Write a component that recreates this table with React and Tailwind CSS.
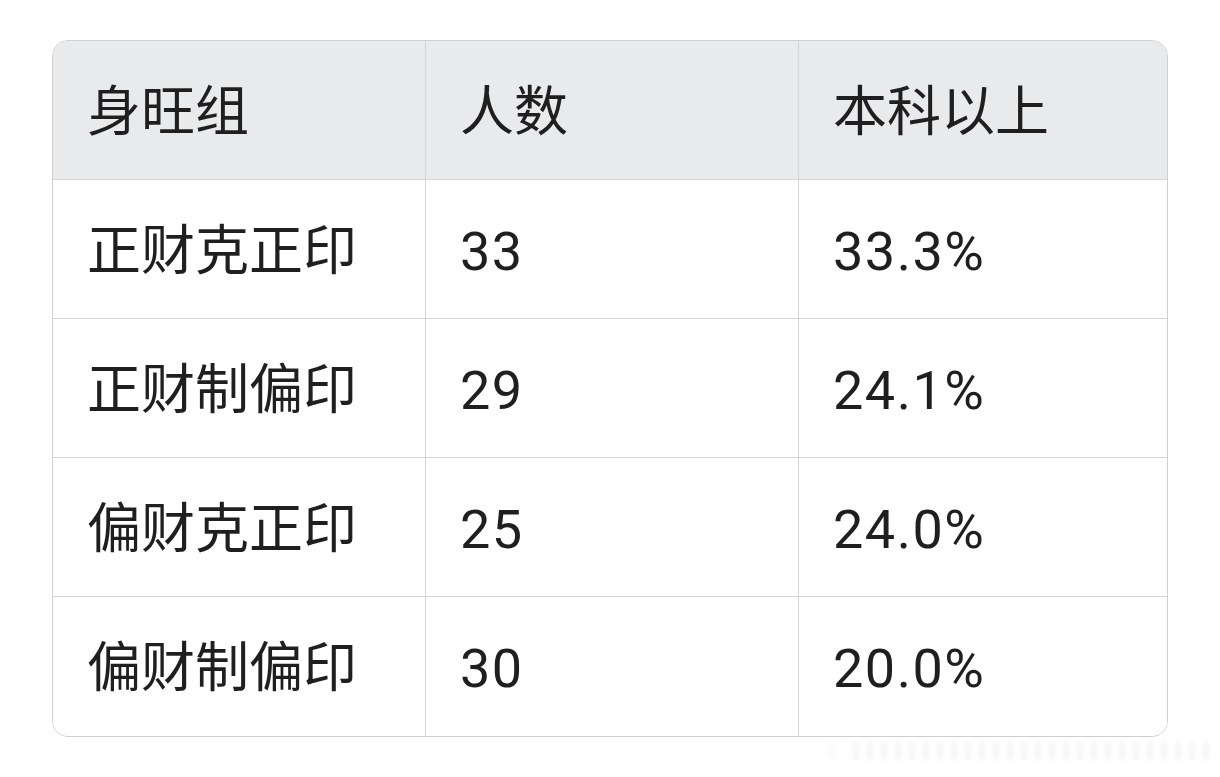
import React from "react";

const rows = [
  ["正财克正印", "33", "33.3%"],
  ["正财制偏印", "29", "24.1%"],
  ["偏财克正印", "25", "24.0%"],
  ["偏财制偏印", "30", "20.0%"],
];

const font = { fontFamily: 'Roboto, "Noto Sans CJK SC", sans-serif' };

function Cell({ children, last, header, bottom, num }) {
  return (
    <div
      className={
        "flex items-center pl-[34px] pt-[5px] text-[54px] leading-none text-[#1f1f1f] " +
        (num ? "tracking-[1.5px] " : "") +
        (last ? "" : "border-r border-[#d4d4d4] ") +
        (bottom ? "" : "border-b border-[#d4d4d4] ") +
        (header ? "bg-[#e9eaec] h-[139px]" : "bg-white h-[139px]")
      }
    >
      {children}
    </div>
  );
}

export default function App() {
  return (
    <div className="relative w-[1220px] h-[777px] bg-white" style={font}>
      <div className="pt-[40px] pl-[52px]">
        <div className="w-[1116px] border border-[#d0d0d0] rounded-[16px] overflow-hidden grid grid-cols-[373px_373px_1fr]">
          <Cell header>身旺组</Cell>
          <Cell header>人数</Cell>
          <Cell header last>本科以上</Cell>
          {rows.map((r, i) => (
            <React.Fragment key={i}>
              <Cell bottom={i === rows.length - 1}>{r[0]}</Cell>
              <Cell bottom={i === rows.length - 1} num>{r[1]}</Cell>
              <Cell bottom={i === rows.length - 1} last num>{r[2]}</Cell>
            </React.Fragment>
          ))}
        </div>
      </div>
      <div className="absolute left-[830px] top-[738px] w-[380px] h-[26px] flex items-center gap-[6px] blur-[2px] opacity-50">
        <div className="w-[18px] h-[20px] rounded-l-full border-l-2 border-[#e0e0e0]" />
        <div className="flex-1 h-[18px] bg-[repeating-linear-gradient(90deg,#e6e6e6_0px,#e6e6e6_4px,transparent_4px,transparent_14px)]" />
      </div>
    </div>
  );
}
